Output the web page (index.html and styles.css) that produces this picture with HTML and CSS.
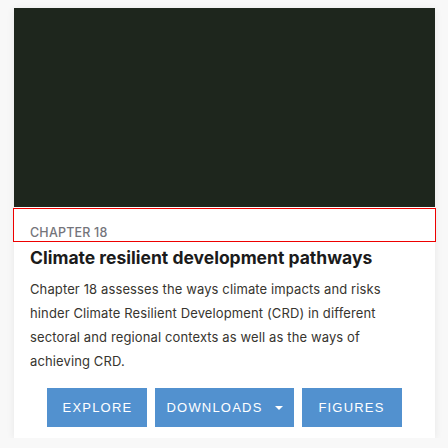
FILE: index.html
```html
<!DOCTYPE html>
<html lang="en">
<head>
<meta charset="utf-8">
<title>Chapter 18</title>
<link rel="stylesheet" href="styles.css">
</head>
<body>
<div class="page">
  <article class="card">
    <div class="cover"></div>
    <header class="head">
      <span class="label">CHAPTER 18</span>
    </header>
    <h2 class="title">Climate resilient development pathways</h2>
    <p class="desc">Chapter 18 assesses the ways climate impacts and risks hinder Climate Resilient Development (CRD) in different sectoral and regional contexts as well as the ways of achieving CRD.</p>
    <div class="actions">
      <a class="btn">Explore</a>
      <a class="btn">Downloads <span class="caret"></span></a>
      <a class="btn">Figures</a>
    </div>
  </article>
</div>
</body>
</html>
```

FILE: styles.css
```css
html, body {
  margin: 0;
  padding: 0;
  background: #f8f8f8;
}

.page {
  padding: 8px 13px 0 14px;
}

.card {
  background: #ffffff;
  box-shadow: 0 1px 8px rgba(0, 0, 0, 0.07);
  padding-bottom: 11px;
}

.cover {
  height: 199px;
  background: #1e261d;
}

.head {
  box-sizing: border-box;
  height: 32px;
  margin-top: 2px;
  padding: 17px 16px 0;
  outline: 1px solid #ee0000;
}

.label {
  display: block;
  font-family: Inter, "Liberation Sans", sans-serif;
  font-size: 12.5px;
  font-weight: 500;
  line-height: 14px;
  letter-spacing: 0.2px;
  color: #74747b;
}

.title {
  margin: 6px 16px 0;
  font-family: Inter, "Liberation Sans", sans-serif;
  font-size: 17.5px;
  font-weight: 700;
  line-height: 22px;
  color: #1b1b1b;
}

.desc {
  margin: 8px 16px 0;
  font-family: Inter, "Liberation Sans", sans-serif;
  font-size: 13px;
  line-height: 24px;
  letter-spacing: 0.12px;
  color: #37352f;
}

.actions {
  display: flex;
  justify-content: center;
  gap: 8px;
  margin-top: 15px;
}

.btn {
  display: flex;
  align-items: center;
  justify-content: center;
  box-sizing: border-box;
  min-width: 100px;
  height: 39px;
  padding: 0 11px;
  background: #5291cf;
  color: #ffffff;
  font-family: "Liberation Sans", Arial, sans-serif;
  font-size: 13px;
  letter-spacing: 1.2px;
  text-transform: uppercase;
  text-decoration: none;
}

.caret {
  display: inline-block;
  width: 0;
  height: 0;
  margin-left: 12px;
  border-left: 4px solid transparent;
  border-right: 4px solid transparent;
  border-top: 4px solid #ffffff;
}
```
